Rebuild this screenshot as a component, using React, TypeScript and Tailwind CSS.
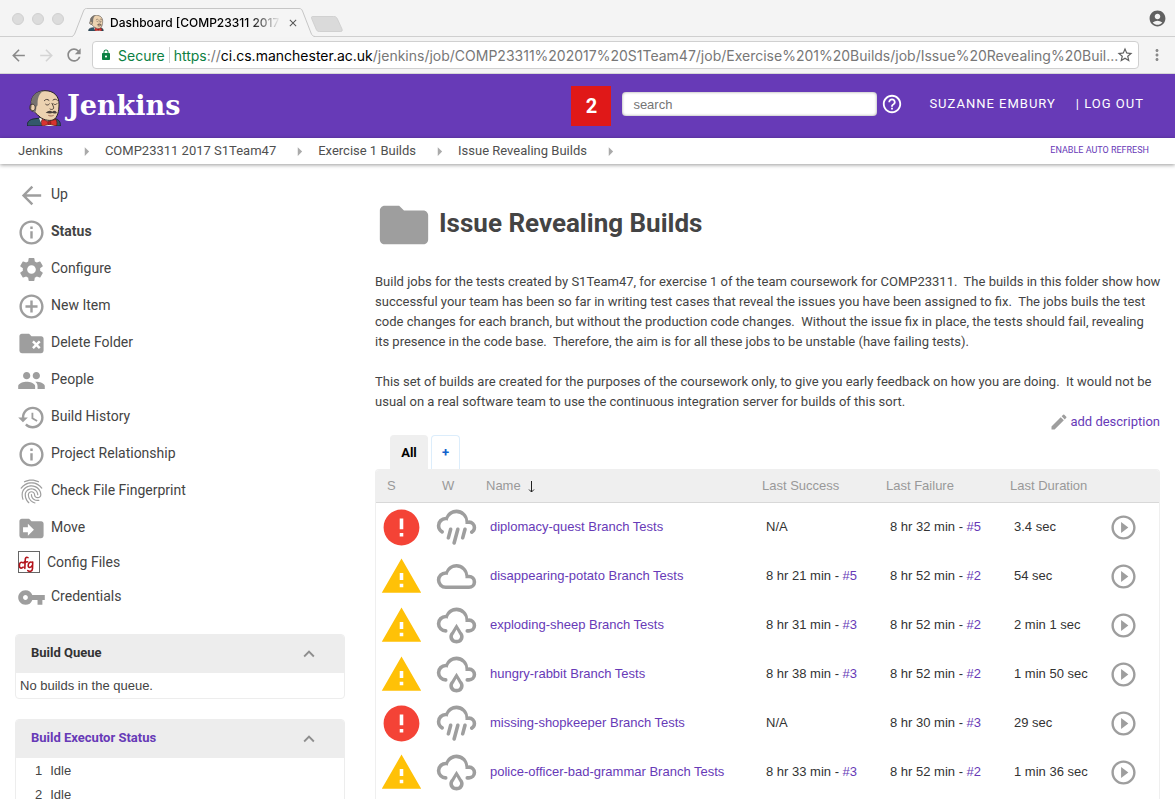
import React from "react";
import {
  MdArrowBack,
  MdArrowForward,
  MdRefresh,
  MdLock,
  MdStarBorder,
  MdMoreVert,
  MdAccountCircle,
  MdHelpOutline,
  MdInfoOutline,
  MdSettings,
  MdAddCircleOutline,
  MdPeople,
  MdHistory,
  MdFingerprint,
  MdVpnKey,
  MdExpandLess,
  MdFolder,
  MdEdit,
  MdError,
  MdWarning,
  MdPlayCircleOutline,
  MdClose,
  MdArrowRight,
} from "react-icons/md";

const FOLDER =
  "M20,6H12L10,4H4C2.89,4 2,4.89 2,6V18A2,2 0 0,0 4,20H20A2,2 0 0,0 22,18V8C22,6.89 21.1,6 20,6Z";

function Glyph({ d, className }: { d: string; className?: string }) {
  return (
    <svg viewBox="0 0 24 24" className={className} fill="currentColor" fillRule="evenodd" aria-hidden="true">
      <path d={d} />
    </svg>
  );
}

const FolderRemove = (p: { className?: string }) => (
  <Glyph
    className={p.className}
    d={
      FOLDER +
      "M12.46,10.88L14.59,13L12.46,15.12L13.88,16.54L16,14.41L18.12,16.54L19.54,15.12L17.41,13L19.54,10.88L18.12,9.46L16,11.59L13.88,9.46L12.46,10.88Z"
    }
  />
);

const FolderMove = (p: { className?: string }) => (
  <Glyph className={p.className} d={FOLDER + "M9,18V15H5V11H9V8L14,13L9,18Z"} />
);

const ConfigFiles = (p: { className?: string }) => (
  <svg viewBox="0 0 22 22" className={p.className} fill="none" aria-hidden="true">
    <rect x="0.5" y="0.5" width="21" height="21" fill="#fff" stroke="#666" />
    <g stroke="#b3131b" strokeWidth="1.6" strokeLinecap="round" strokeLinejoin="round">
      <path d="M4.600 11.600C3 10.600 1.400 12 1.400 14.400C1.400 17.200 3.400 17.800 5.200 16.200" />
      <path d="M10 6.600C8 5.600 7.200 7.200 7.200 9.600L6.800 17.400M5.200 11.600L9.600 10.800" />
      <path d="M14.400 11.400C12 10.200 10.200 12 10.200 14.400C10.200 17 12.800 17.200 14.300 14.400M14.700 11L14.500 17.600C14.300 20.600 11.600 21 9.800 19.600" />
    </g>
  </svg>
);

const CLOUD_TOP =
  "M17,10V9A5,5 0 0,0 12,4C9.5,4 7.45,5.82 7.06,8.19C6.73,8.07 6.37,8 6,8A3,3 0 0,0 3,11";

const Pouring = (p: { className?: string }) => (
  <svg viewBox="0 0 24 24" className={p.className} fill="currentColor" aria-hidden="true">
    <path d="M9,12C9.53,12.14 9.85,12.69 9.71,13.22L8.41,18.05C8.27,18.59 7.72,18.9 7.19,18.76C6.65,18.62 6.34,18.07 6.5,17.54L7.78,12.71C7.92,12.17 8.47,11.86 9,12M13,12C13.53,12.14 13.85,12.69 13.71,13.22L11.64,20.95C11.5,21.5 10.95,21.8 10.41,21.66C9.88,21.5 9.56,20.97 9.7,20.43L11.78,12.71C11.92,12.17 12.47,11.86 13,12M17,12C17.53,12.14 17.85,12.69 17.71,13.22L16.41,18.05C16.27,18.59 15.72,18.9 15.19,18.76C14.65,18.62 14.34,18.07 14.5,17.54L15.78,12.71C15.92,12.17 16.47,11.86 17,12" />
    <path
      d={
        CLOUD_TOP +
        "C3,12.11 3.6,13.08 4.5,13.6V13.59C5,13.87 5.14,14.5 4.87,14.96C4.59,15.43 4,15.6 3.5,15.32V15.33C2,14.47 1,12.85 1,11A5,5 0 0,1 6,6C7,3.65 9.3,2 12,2C15.43,2 18.24,4.66 18.5,8.03L19,8A4,4 0 0,1 23,12C23,13.5 22.2,14.77 21,15.46V15.46C20.5,15.73 19.91,15.57 19.63,15.09C19.36,14.61 19.5,14 20,13.72V13.73C20.6,13.39 21,12.74 21,12A2,2 0 0,0 19,10H17Z"
      }
    />
  </svg>
);

const Rainy = (p: { className?: string }) => (
  <svg viewBox="0 0 24 24" className={p.className} fill="currentColor" fillRule="evenodd" aria-hidden="true">
    <path d="M14.83,15.67C16.39,17.23 16.39,19.5 14.83,21.08C14.05,21.86 13,22 12,22C11,22 9.95,21.86 9.17,21.08C7.61,19.5 7.61,17.23 9.17,15.67L12,11L14.83,15.67M13.41,16.69L12,14.25L10.59,16.69C9.8,17.5 9.8,18.7 10.59,19.5C11,19.93 11.5,20 12,20C12.5,20 13,19.93 13.41,19.5C14.2,18.7 14.2,17.5 13.41,16.69Z" />
    <path
      d={
        CLOUD_TOP +
        "A3,3 0 0,0 6,14A1,1 0 0,1 7,15A1,1 0 0,1 6,16A5,5 0 0,1 1,11A5,5 0 0,1 6,6C7,3.65 9.3,2 12,2C15.43,2 18.24,4.66 18.5,8.03L19,8A4,4 0 0,1 23,12A4,4 0 0,1 19,16H18A1,1 0 0,1 17,15A1,1 0 0,1 18,14H19A2,2 0 0,0 21,12A2,2 0 0,0 19,10H17Z"
      }
    />
  </svg>
);

const Cloudy = (p: { className?: string }) => (
  <Glyph
    className={p.className}
    d="M6,19A5,5 0 0,1 1,14A5,5 0 0,1 6,9C7,6.65 9.3,5 12,5C15.43,5 18.24,7.66 18.5,11.03L19,11A4,4 0 0,1 23,15A4,4 0 0,1 19,19H6M19,13H17V12A5,5 0 0,0 12,7C9.5,7 7.45,8.82 7.06,11.19C6.73,11.07 6.37,11 6,11A3,3 0 0,0 3,14A3,3 0 0,0 6,17H19A2,2 0 0,0 21,15A2,2 0 0,0 19,13Z"
  />
);

function Butler({ className }: { className?: string }) {
  return (
    <svg viewBox="0 0 102 108" className={className} aria-hidden="true">
      <path d="M1 108C0 96 6 90 18 87L40 84L84 86C96 89 101 96 100 108Z" fill="#33586b" stroke="#1d2a33" strokeWidth="3" />
      <path d="M36 84L46 108H84L78 86Z" fill="#f4f1ea" />
      <path d="M13 62C6 58 8 46 13 42C10 22 26 2 54 2C80 2 97 18 96 44C96 62 92 84 78 90C64 94 44 88 36 78C30 74 24 68 22 64Z" fill="#ecd2b0" stroke="#2b2625" strokeWidth="3" />
      <path d="M13 42C10 20 26 4 50 2C36 10 34 22 32 32C31 42 34 46 28 50C28 58 27 64 23 68C18 66 16 62 17 54Z" fill="#77736f" />
      <path d="M12 44C20 40 26 46 24 56C22 64 12 64 11 56Z" fill="#ecd2b0" stroke="#2b2625" strokeWidth="2.5" />
      <path d="M52 32C56 27 62 27 66 31M78 30C82 26 88 27 91 31M56 43C59 46 64 46 67 42M80 42C83 45 88 44 90 41M75 40C78 48 84 56 76 58C73 59 70 58 69 57" fill="none" stroke="#4a3d36" strokeWidth="3" strokeLinecap="round" />
      <path d="M56 68C64 61 70 60 76 65C82 60 87 63 90 69C82 72 78 70 76 69C72 71 66 71 56 68Z" fill="#4a403b" />
      <path d="M64 76C70 79 76 78 80 76" fill="none" stroke="#8a4a40" strokeWidth="2.500" />
      <path d="M46 88L64 95L86 88C91 95 91 102 88 108L68 103L46 108C42 102 42 94 46 88Z" fill="#d8332f" stroke="#5d1616" strokeWidth="2" />
      <circle cx="67" cy="99" r="5" fill="#b32020" stroke="#5d1616" strokeWidth="1.5" />
    </svg>
  );
}

function BrowserChrome() {
  return (
    <header className="shrink-0 bg-[#f4f4f4] font-[Inter,sans-serif]">
      <div className="flex h-[37px] items-end border-b border-[#cfcfcf]">
        <div className="flex gap-2 self-center pl-3 pt-px" aria-hidden="true">
          <span className="size-3 rounded-full border border-[#d0d0d0] bg-[#dcdcdc]" />
          <span className="size-3 rounded-full border border-[#d0d0d0] bg-[#dcdcdc]" />
          <span className="size-3 rounded-full border border-[#d0d0d0] bg-[#dcdcdc]" />
        </div>
        <div className="relative -mb-px ml-2 h-[29px] w-[243px]">
          <svg viewBox="0 0 243 29" className="absolute inset-0 size-full" aria-hidden="true">
            <path d="M0 28.500C1.500 28 2 27 3 25L11.500 3C12.500 1 13 .5 14.500 .5H227C229 .5 229.500 1 230.500 3L239 25C240 27.500 241 28.300 243 28.500V29H0Z" fill="#f5f5f5" />
            <path d="M0 28.500C1.500 28 2 27 3 25L11.500 3C12.500 1 13 .5 14.500 .5H227C229 .5 229.500 1 230.500 3L239 25C240 27.500 241 28.300 243 28.500" fill="none" stroke="#c6c6c6" />
          </svg>
          <div className="relative flex h-full items-center pl-4">
            <Butler className="size-4 shrink-0" />
            <div className="ml-[6px] w-[174px] overflow-hidden whitespace-nowrap bg-gradient-to-r from-black from-80% to-transparent to-98% bg-clip-text text-[12px] font-medium text-transparent">
              Dashboard [COMP23311 2017
            </div>
            <button aria-label="Close tab" className="ml-[3px] text-[#555]">
              <MdClose className="size-3" />
            </button>
          </div>
        </div>
        <svg viewBox="0 0 34 17" className="-ml-1 mb-1 h-4 w-8 shrink-0" aria-hidden="true">
          <path d="M2 .5H24C26 .5 27 1 28 3L33 14C33.500 16 33 16.500 31 16.500H9C7 16.500 6.500 16 5.500 14L.8 3C.3 1 .5 .5 2 .5Z" fill="#dadada" stroke="#cfcfcf" />
        </svg>
        <MdAccountCircle className="mb-2 ml-auto mr-2 size-[19px] text-[#616161]" />
      </div>
      <div className="flex h-[37px] items-center border-b border-[#d6d6d6] pr-[9px] pl-[9px]">
        <button aria-label="Back" className="text-[#8a8a8a]">
          <MdArrowBack className="size-[19px]" />
        </button>
        <button aria-label="Forward" className="ml-[9px] text-[#d4d4d4]">
          <MdArrowForward className="size-[19px]" />
        </button>
        <button aria-label="Reload" className="ml-2 text-[#8a8a8a]">
          <MdRefresh className="size-5" />
        </button>
        <div className="ml-2 flex h-7 min-w-0 flex-1 items-center rounded border border-[#d0d0d0] bg-white pr-1 pl-[7px] text-[14px]">
          <MdLock className="size-3 shrink-0 text-[#0b8043]" />
          <span className="ml-[6px] text-[#0b8043]">Secure</span>
          <span className="mx-1 h-4 w-px bg-[#d0d0d0]" />
          <span className="min-w-0 flex-1 whitespace-nowrap text-[#777]">
            <span className="text-[#0b8043]">https</span>://<span className="text-black">ci.cs.manchester.ac.uk</span>
            /jenkins/job/COMP23311%202017%20S1Team47/job/Exercise%201%20Builds/job/Issue%20Revealing%20Buil...
          </span>
          <button aria-label="Bookmark this page" className="text-[#5f5f5f]">
            <MdStarBorder className="size-[18px]" />
          </button>
        </div>
        <button aria-label="Browser menu" className="ml-[9px] text-[#8a8a8a]">
          <MdMoreVert className="size-[18px]" />
        </button>
      </div>
    </header>
  );
}

function JenkinsHeader() {
  return (
    <div className="flex h-16 shrink-0 items-center bg-[#673ab7] pr-[31px] pl-[27px] text-white">
      <a href="#home" className="flex items-center">
        <Butler className="mt-1 h-9 w-[34px]" />
        <span className="ml-[6px] font-['DejaVu_Serif',serif] text-[27px] leading-8 font-bold">Jenkins</span>
      </a>
      <a href="#alerts" className="ml-auto flex size-10 items-center justify-center bg-[#e01818] text-[20px] font-bold">
        2
      </a>
      <div className="ml-[11px] flex items-center pb-1">
        <input
          type="text"
          aria-label="Search"
          placeholder="search"
          className="h-6 w-[255px] rounded bg-white pr-2 pl-[11px] font-['Liberation_Sans',sans-serif] text-[13px] text-[#444] shadow-[inset_0_0_3px_rgba(0,0,0,0.4)] placeholder:text-[#757575]"
        />
        <a href="#help" aria-label="Help" className="ml-1">
          <MdHelpOutline className="size-[22px]" />
        </a>
        <a href="#user" className="ml-[26px] text-[13px] tracking-[1px]">SUZANNE EMBURY</a>
        <span className="ml-5 text-[13px] tracking-[1px]">
          | <a href="#logout">LOG OUT</a>
        </span>
      </div>
    </div>
  );
}

const CRUMBS = ["Jenkins", "COMP23311 2017 S1Team47", "Exercise 1 Builds", "Issue Revealing Builds"];

function Breadcrumbs() {
  return (
    <nav className="relative flex h-[26px] shrink-0 items-center bg-white pr-[26px] pl-[18px] text-[13px] text-[#4f4f4f] shadow-[0_1px_4px_rgba(0,0,0,0.4)]">
      {CRUMBS.map((c) => (
        <React.Fragment key={c}>
          <a href="#crumb">{c}</a>
          <MdArrowRight className="mr-2 ml-[13px] size-[21px] text-[#aaa]" />
        </React.Fragment>
      ))}
      <a href="#refresh" className="ml-auto text-[9px] text-[#673ab7]">ENABLE AUTO REFRESH</a>
    </nav>
  );
}

type IconType = React.ComponentType<{ className?: string }>;

const TASKS: { label: string; icon: IconType; active?: boolean }[] = [
  { label: "Up", icon: MdArrowBack },
  { label: "Status", icon: MdInfoOutline, active: true },
  { label: "Configure", icon: MdSettings },
  { label: "New Item", icon: MdAddCircleOutline },
  { label: "Delete Folder", icon: FolderRemove },
  { label: "People", icon: MdPeople },
  { label: "Build History", icon: MdHistory },
  { label: "Project Relationship", icon: MdInfoOutline },
  { label: "Check File Fingerprint", icon: MdFingerprint },
  { label: "Move", icon: FolderMove },
];

function TaskLink({ label, icon: Icon, active }: { label: string; icon: IconType; active?: boolean }) {
  return (
    <a href="#task" className="flex h-[37px] items-center gap-[5px] pl-[17px]">
      <Icon className="mt-0.5 size-[29px] shrink-0 text-[#9e9e9e]" />
      <span className={active ? "font-bold" : ""}>{label}</span>
    </a>
  );
}

function Panel({ title, accent, children }: { title: string; accent?: boolean; children: React.ReactNode }) {
  return (
    <section className="overflow-hidden rounded border border-[#ededed] text-[13px]">
      <div className="flex h-[38px] items-center justify-between bg-[#ededed] pr-6 pb-0.5 pl-[15px]">
        <h2 className={accent ? "font-bold text-[#673ab7]" : "font-bold text-[#333]"}>{title}</h2>
        <button aria-label={"Collapse " + title} className="pt-0.5">
          <MdExpandLess className="size-[22px] text-[#8f8f8f]" />
        </button>
      </div>
      <div className="font-['Liberation_Sans',sans-serif]">{children}</div>
    </section>
  );
}

function Sidebar() {
  return (
    <aside className="w-[360px] shrink-0 pt-3">
      <nav className="text-[14px] text-[#444]">
        {TASKS.map((t) => (
          <TaskLink key={t.label} {...t} />
        ))}
        <a href="#config-files" className="flex h-8 items-center gap-[7px] pl-[18px]">
          <ConfigFiles className="size-[22px]" />
          Config Files
        </a>
        <TaskLink label="Credentials" icon={MdVpnKey} />
      </nav>
      <div className="mt-[19px] mr-[15px] ml-[15px] flex flex-col gap-5">
        <Panel title="Build Queue">
          <p className="h-[25px] pl-1 leading-[25px]">No builds in the queue.</p>
        </Panel>
        <Panel title="Build Executor Status" accent>
          <ol className="leading-none">
            {[1, 2].map((n) => (
              <li key={n} className="flex h-6 items-center gap-2 pl-[19px]">
                <span>{n}</span>
                <span>Idle</span>
              </li>
            ))}
          </ol>
        </Panel>
      </div>
    </aside>
  );
}

interface Job {
  name: string;
  failed?: boolean;
  weather: IconType;
  success?: [string, string];
  failure: [string, string];
  duration: string;
}

const JOBS: Job[] = [
  { name: "diplomacy-quest", failed: true, weather: Pouring, failure: ["8 hr 32 min", "#5"], duration: "3.4 sec" },
  { name: "disappearing-potato", weather: Cloudy, success: ["8 hr 21 min", "#5"], failure: ["8 hr 52 min", "#2"], duration: "54 sec" },
  { name: "exploding-sheep", weather: Rainy, success: ["8 hr 31 min", "#3"], failure: ["8 hr 52 min", "#2"], duration: "2 min 1 sec" },
  { name: "hungry-rabbit", weather: Rainy, success: ["8 hr 38 min", "#3"], failure: ["8 hr 52 min", "#2"], duration: "1 min 50 sec" },
  { name: "missing-shopkeeper", failed: true, weather: Pouring, failure: ["8 hr 30 min", "#3"], duration: "29 sec" },
  { name: "police-officer-bad-grammar", weather: Rainy, success: ["8 hr 33 min", "#3"], failure: ["8 hr 52 min", "#2"], duration: "1 min 36 sec" },
];

function BuildRef({ build }: { build?: [string, string] }) {
  if (!build) return <>N/A</>;
  return (
    <>
      {build[0]} - <a href="#build" className="text-[#673ab7]">{build[1]}</a>
    </>
  );
}

function JobTable() {
  return (
    <div className="flex-1 overflow-hidden rounded-t border border-b-0 border-[#efefef] font-['Liberation_Sans',sans-serif] text-[13px]">
      <table className="w-full table-fixed border-collapse text-left whitespace-nowrap">
        <colgroup>
          <col className="w-[55px]" />
          <col className="w-11" />
          <col />
          <col className="w-[124px]" />
          <col className="w-[124px]" />
          <col className="w-[100px]" />
          <col className="w-[60px]" />
        </colgroup>
        <thead>
          <tr className="h-8 border-b border-[#d8d8d8] bg-[#efefef] text-[#999]">
            <th className="pl-[11px] font-normal">S</th>
            <th className="pl-[11px] font-normal">W</th>
            <th className="pl-[11px] font-normal">
              <span className="flex items-center gap-[7px]">
                Name
                <svg viewBox="0 0 7 12" className="mt-0.5 h-3 w-[7px] text-[#222]" fill="none" stroke="currentColor" aria-hidden="true">
                  <path d="M3.500 0V11M1 8.500L3.500 11L6 8.500" />
                </svg>
              </span>
            </th>
            <th className="pl-[11px] font-normal">Last Success</th>
            <th className="pl-[11px] font-normal">Last Failure</th>
            <th className="pl-[11px] font-normal">Last Duration</th>
            <th aria-label="Build" />
          </tr>
        </thead>
        <tbody className="text-[#333]">
          {JOBS.map(({ weather: Weather, ...j }) => (
            <tr key={j.name} className="h-[49px]">
              <td className="pt-0.5 pl-1">
                {j.failed ? <MdError className="size-[43px] text-[#f44336]" /> : <MdWarning className="size-[43px] text-[#ffc107]" />}
              </td>
              <td className="pt-0.5 pl-1">
                <Weather className="size-[43px] max-w-none text-[#9e9e9e]" />
              </td>
              <td className="pl-[15px]">
                <a href="#job" className="text-[#673ab7]">{j.name} Branch Tests</a>
              </td>
              <td className="pl-[15px]"><BuildRef build={j.success} /></td>
              <td className="pl-[15px]"><BuildRef build={j.failure} /></td>
              <td className="pl-[15px]">{j.duration}</td>
              <td className="pt-0.5 pl-[10px]">
                <button aria-label={"Build " + j.name} className="block text-[#9e9e9e]">
                  <MdPlayCircleOutline className="size-[29px]" />
                </button>
              </td>
            </tr>
          ))}
        </tbody>
      </table>
    </div>
  );
}

function Main() {
  return (
    <main className="flex min-w-0 flex-1 flex-col pt-8 pr-[15px] pl-[15px] text-[13px] leading-5 text-[#444]">
      <div className="flex shrink-0 items-center gap-[6px]">
        <MdFolder className="size-[58px] text-[#9e9e9e]" />
        <h1 className="pb-1 text-[26px] leading-8 font-bold">Issue Revealing Builds</h1>
      </div>
      <div className="mt-[18px] -mr-0.5 flex flex-col gap-5">
        <p>
          Build jobs for the tests created by S1Team47, for exercise 1 of the team coursework for COMP23311.&nbsp; The
          builds in this folder show how successful your team has been so far in writing test cases that reveal the
          issues you have been assigned to fix.&nbsp; The jobs buils the test code changes for each branch, but without
          the production code changes.&nbsp; Without the issue fix in place, the tests should fail, revealing
          its&nbsp;presence in the code base.&nbsp; Therefore, the aim is for all these jobs to be unstable (have
          failing tests).
        </p>
        <p>
          This set of builds are created for the purposes of the coursework only, to give you early feedback on how you
          are doing.&nbsp; It would not be usual on a real software team to use the continuous integration server for
          builds of this sort.
        </p>
      </div>
      <a href="#description" className="flex h-5 items-center gap-px self-end text-[#673ab7]">
        <MdEdit className="size-5 text-[#9e9e9e]" />
        add description
      </a>
      <div className="mt-[3px] ml-[15px] flex shrink-0 gap-[3px] font-bold">
        <button className="h-[34px] w-[38px] rounded-t border border-b-0 border-[#efefef] bg-[#efefef] text-black">All</button>
        <button aria-label="New view" className="h-[34px] w-[29px] rounded-t border border-b-0 border-[#dcedfb] text-[#1161cc]">
          +
        </button>
      </div>
      <JobTable />
    </main>
  );
}

export default function App() {
  return (
    <div className="flex h-screen flex-col overflow-hidden bg-white font-[Roboto,sans-serif] text-[#444]">
      <BrowserChrome />
      <JenkinsHeader />
      <Breadcrumbs />
      <div className="flex min-h-0 flex-1 overflow-hidden">
        <Sidebar />
        <Main />
      </div>
    </div>
  );
}
